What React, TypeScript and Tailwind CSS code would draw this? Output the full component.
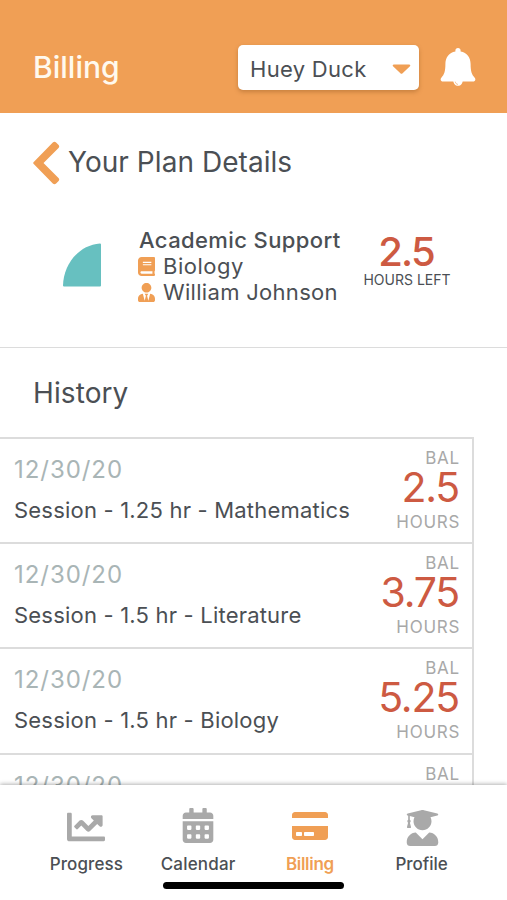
import {
  FaBook,
  FaCalendarAlt,
  FaCaretDown,
  FaChartLine,
  FaCreditCard,
  FaUserGraduate,
  FaUserTie,
} from 'react-icons/fa'

interface Session {
  date: string
  title: string
  balance: string
}

const sessions: Session[] = [
  { date: '12/30/20', title: 'Session - 1.25 hr - Mathematics', balance: '2.5' },
  { date: '12/30/20', title: 'Session - 1.5 hr - Literature', balance: '3.75' },
  { date: '12/30/20', title: 'Session - 1.5 hr - Biology', balance: '5.25' },
  { date: '12/30/20', title: 'Session - 1 hr - Biology', balance: '6.75' },
]

function BellIcon() {
  return (
    <svg viewBox="0 0 36 40" className="h-10 w-9 shrink-0" fill="none">
      <path
        d="M18 1c1.6 0 2.6 1.1 2.6 2.6v.9C27 5.7 30.6 10.5 30.6 17c0 7.5 1.2 10.5 3.9 13.4 1.8 2 .6 4.2-1.7 4.2H3.2c-2.3 0-3.5-2.2-1.7-4.2C4.2 27.5 5.400 24.500 5.400 17c0-6.500 3.600-11.300 10-12.500v-.9C15.400 2.100 16.400 1 18 1z"
        fill="#fff"
      />
      <path d="M13.300 33.500h9.400c0 3-2 5.300-4.700 5.300s-4.700-2.300-4.700-5.300z" fill="#fff" />
      <path d="M15.300 34.700c.2 1.500 1.200 2.600 2.600 2.700" stroke="#f2b680" strokeWidth="0.900" />
    </svg>
  )
}

function Header() {
  return (
    <header className="flex h-[113px] shrink-0 items-end bg-[#f09f55] pr-[31px] pb-[23px] pl-[33px]">
      <h1 className="mb-[3px] flex-1 text-[30px] leading-10 font-medium text-[#fff9ee]">Billing</h1>
      <button className="mr-[21px] flex h-[45px] w-[181px] items-center justify-between rounded-[5px] bg-white pr-2 pl-3 shadow-[0_2px_4px_rgba(120,70,20,0.35)]">
        <span className="mt-0.5 text-[22px] leading-7 tracking-[0.3px]">Huey Duck</span>
        <FaCaretDown className="mt-px h-7 w-[19px] text-[#f09f55]" preserveAspectRatio="none" />
      </button>
      <div className="mb-[3px]">
        <BellIcon />
      </div>
    </header>
  )
}

function PlanDetails() {
  return (
    <section className="h-[235px] shrink-0 border-b border-[#dcdcdc]">
      <div className="flex items-center pt-[27px] pl-[33px]">
        <svg viewBox="0 0 27 44" className="mt-px -mb-px h-11 w-[27px]" fill="#f09f55">
          <path d="M.5 21.200 19.800 1.400c1-1 2.300-1 3.300 0l2.500 2.500c.9.9.8 2-.1 3L10.500 22l15 15c.9 1 1 2.100.1 3l-2.500 2.600c-1 1-2.300 1-3.300 0L.5 22.800c-.5-.5-.5-1.100 0-1.600z" />
        </svg>
        <h2 className="ml-2 text-[28px] leading-9 tracking-[0.05px]">Your Plan Details</h2>
      </div>

      <div className="mt-[43px] flex pl-[62px]">
        {/* Remaining share of the plan */}
        <svg viewBox="0 0 39 44" className="mt-4 h-11 w-[39px] shrink-0" fill="#67c0c0">
          <path d="M39 1.500Q39 .5 38 .5C17 2 1.500 21 1 42.500Q1 43.500 2 43.500H38Q39 43.500 39 42.500z" />
        </svg>
        <div className="ml-[37px] w-[214px] shrink-0 text-[22px] leading-[26px]">
          <div className="pl-px font-medium tracking-[0.4px] whitespace-nowrap">Academic Support</div>
          <div className="flex items-center gap-2">
            <FaBook className="h-[19px] w-[17px] text-[#f09f55]" preserveAspectRatio="none" />
            <span className="tracking-[0.5px]">Biology</span>
          </div>
          <div className="flex items-center gap-2">
            <FaUserTie className="h-[19px] w-[17px] text-[#f09f55]" preserveAspectRatio="none" />
            <span className="tracking-[0.3px] whitespace-nowrap">William Johnson</span>
          </div>
        </div>
        <div className="mt-[5px] w-[110px] text-center">
          <div className="pr-0.5 text-[40px] leading-10 font-medium tracking-[-1.8px] text-[#cd5a42]">2.5</div>
          <div className="text-[14px] leading-4">HOURS LEFT</div>
        </div>
      </div>
    </section>
  )
}

function HistoryRow({ session }: { session: Session }) {
  return (
    <li className="flex h-[105.2px] justify-between border-t-2 border-[#dcdcdc] pr-3 pl-[14px]">
      <div className="pt-[15px]">
        <div className="text-[24px] leading-8 tracking-[0.95px] text-[#a9b5b6]">{session.date}</div>
        <div className="mt-[10px] text-[22px] leading-7 tracking-[0.2px] whitespace-nowrap">{session.title}</div>
      </div>
      <div className="flex flex-col items-end pt-[9px]">
        <div className="text-[17px] leading-5 tracking-[0.8px] text-[#a8a8a8]">BAL</div>
        <div className="-mt-px pr-px text-[41px] leading-10 tracking-[-1.2px] text-[#cd5a42]">{session.balance}</div>
        <div className="mt-[5px] text-[17px] leading-5 tracking-[0.7px] text-[#a8a8a8]">HOURS</div>
      </div>
    </li>
  )
}

function TabBar() {
  return (
    <nav className="relative flex h-[115px] shrink-0 flex-col items-center bg-white shadow-[0_-1px_4px_rgba(0,0,0,0.3)]">
      <div className="ml-px grid w-[447px] grid-cols-4 text-[17px] leading-5 font-medium">
        <div className="flex flex-col items-center">
          <FaChartLine className="mt-[23px] h-[38px] w-[38px] text-[#a9a9a9]" />
          <span className="mt-2 tracking-[0.1px]">Progress</span>
        </div>
        <div className="flex flex-col items-center">
          <FaCalendarAlt className="mt-[23px] h-[35px] w-8 text-[#a9a9a9]" />
          <span className="mt-[11px] tracking-[0.2px]">Calendar</span>
        </div>
        <div className="flex flex-col items-center text-[#f09f55]">
          <FaCreditCard className="mt-[23px] h-9 w-9" />
          <span className="mt-[10px] font-semibold tracking-[-0.3px]">Billing</span>
        </div>
        <div className="flex flex-col items-center">
          <FaUserGraduate className="mt-[25px] ml-0.5 h-9 w-[33px] text-[#a9a9a9]" />
          <span className="mt-2">Profile</span>
        </div>
      </div>
      <div className="mt-2 h-[7px] w-[181px] rounded-full bg-black" />
    </nav>
  )
}

export default function App() {
  return (
    <div className="flex h-[900px] w-[507px] flex-col overflow-hidden bg-white font-['Inter',sans-serif] text-[#4b4f54]">
      <Header />
      <PlanDetails />
      <section className="min-h-0 flex-1 overflow-hidden">
        <h2 className="pt-[27px] pl-[33px] text-[28px] leading-9 tracking-[0.1px]">History</h2>
        <ul className="mt-[26px] w-[474px] border-r-2 border-[#dcdcdc]">
          {sessions.map((session, i) => (
            <HistoryRow key={i} session={session} />
          ))}
        </ul>
      </section>
      <TabBar />
    </div>
  )
}
